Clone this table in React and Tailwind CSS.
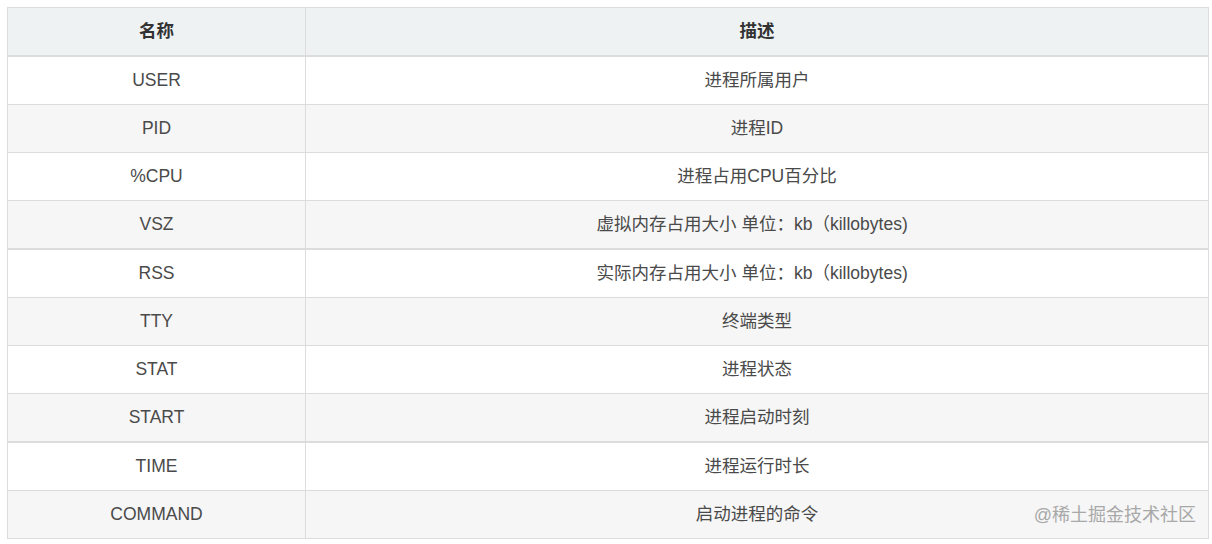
import React from "react";

const rows = [
  ["USER", "进程所属用户"],
  ["PID", "进程ID"],
  ["%CPU", "进程占用CPU百分比"],
  ["VSZ", "虚拟内存占用大小 单位：kb（killobytes)\u00a0\u00a0"],
  ["RSS", "实际内存占用大小 单位：kb（killobytes)\u00a0\u00a0"],
  ["TTY", "终端类型"],
  ["STAT", "进程状态"],
  ["START", "进程启动时刻"],
  ["TIME", "进程运行时长"],
  ["COMMAND", "启动进程的命令"],
];

function rowClass(i, n) {
  const bg = i % 2 === 0 ? "bg-white" : "bg-[#f6f6f6]";
  if (i === n - 1) return "flex h-[47px] " + bg;
  if (i === 3 || i === 7) return "flex h-[49px] border-b-2 border-[#dcdcdc] " + bg;
  return "flex h-[48px] border-b border-[#dcdcdc] " + bg;
}

export default function App() {
  return (
    <div
      className="w-[1212px] h-[544px] bg-white pt-[7px] pl-[7px] text-[17.5px] text-[#4a4a4a]"
      style={{ fontFamily: '"Liberation Sans", Arial, "Noto Sans CJK SC", sans-serif' }}
    >
      <div className="relative w-[1202px] border border-[#dcdcdc]">
        <div className="flex h-[49px] bg-[#eef2f3] border-b-2 border-[#dcdcdc] font-bold text-[#333]">
          <div className="w-[298px] flex items-center justify-center border-r border-[#dcdcdc]">名称</div>
          <div className="flex-1 flex items-center justify-center">描述</div>
        </div>
        {rows.map(([a, b], i) => (
          <div key={a} className={rowClass(i, rows.length)}>
            <div className="w-[298px] flex items-center justify-center border-r border-[#dcdcdc]">{a}</div>
            <div className="flex-1 flex items-center justify-center whitespace-pre">{b}</div>
          </div>
        ))}
        <div className="absolute right-[12px] bottom-[9px] text-[18px] text-[#a8a8a8]">@稀土掘金技术社区</div>
      </div>
    </div>
  );
}
